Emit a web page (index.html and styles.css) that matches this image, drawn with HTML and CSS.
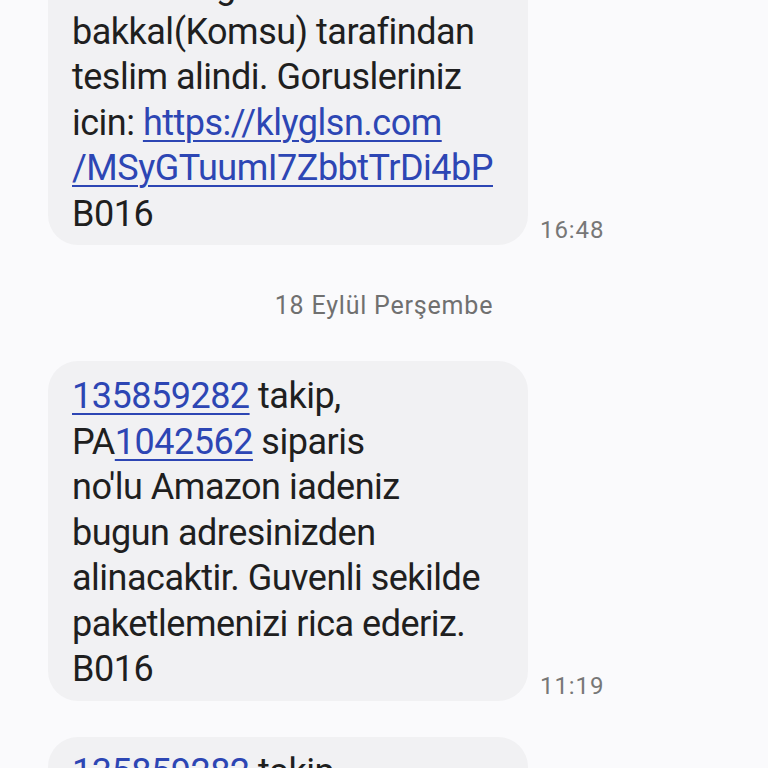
FILE: index.html
```html
<!DOCTYPE html>
<html lang="tr">
<head>
  <meta charset="UTF-8" />
  <meta name="viewport" content="width=device-width, initial-scale=1.0" />
  <title>Mesajlar</title>
  <link rel="stylesheet" href="styles.css">
</head>
<body>
  <div class="thread">
    <div class="msg">
      <div class="bubble">
        numarali gonderiniz<br>
        bakkal(Komsu) tarafindan<br>
        teslim alindi. Gorusleriniz<br>
        icin: <a href="#">https://klyglsn.com<br>/MSyGTuumI7ZbbtTrDi4bP</a><br>
        B016
      </div>
      <span class="time">16:48</span>
    </div>

    <div class="date">18 Eylül Perşembe</div>

    <div class="msg">
      <div class="bubble">
        <a href="#">135859282</a> takip,<br>
        PA<a href="#">1042562</a> siparis<br>
        no'lu Amazon iadeniz<br>
        bugun adresinizden<br>
        alinacaktir. Guvenli sekilde<br>
        paketlemenizi rica ederiz.<br>
        B016
      </div>
      <span class="time">11:19</span>
    </div>

    <div class="msg">
      <div class="bubble">
        <a href="#">135859282</a> takip,<br>
        PA<a href="#">1042562</a> siparis<br>
        no'lu Amazon iadeniz
      </div>
    </div>
  </div>
</body>
</html>
```

FILE: styles.css
```css
body {
  margin: 0;
  background: #fafafc;
  font-family: Roboto, "Liberation Sans", sans-serif;
  color: #1f1f1f;
  overflow: hidden;
}
.thread {
  margin-top: -49px;
}
.msg {
  display: flex;
  align-items: flex-end;
  gap: 12px;
  padding-left: 48px;
  margin-bottom: 36px;
}
.bubble {
  width: 480px;
  box-sizing: border-box;
  padding: 13px 24px 8px;
  background: #f1f1f3;
  border-radius: 30px;
  font-size: 36px;
  letter-spacing: -0.5px;
  line-height: 45.5px;
  white-space: nowrap;
}
.bubble a {
  color: #2d46b4;
  text-decoration: underline;
  text-decoration-thickness: 2px;
  text-underline-offset: 5px;
}
.time {
  font-size: 24px;
  letter-spacing: 0.9px;
  line-height: 30px;
  color: #777;
}
.date {
  margin: 46px 0 40px;
  text-align: center;
  font-size: 25px;
  letter-spacing: 0.8px;
  line-height: 30px;
  color: #707070;
}
```
